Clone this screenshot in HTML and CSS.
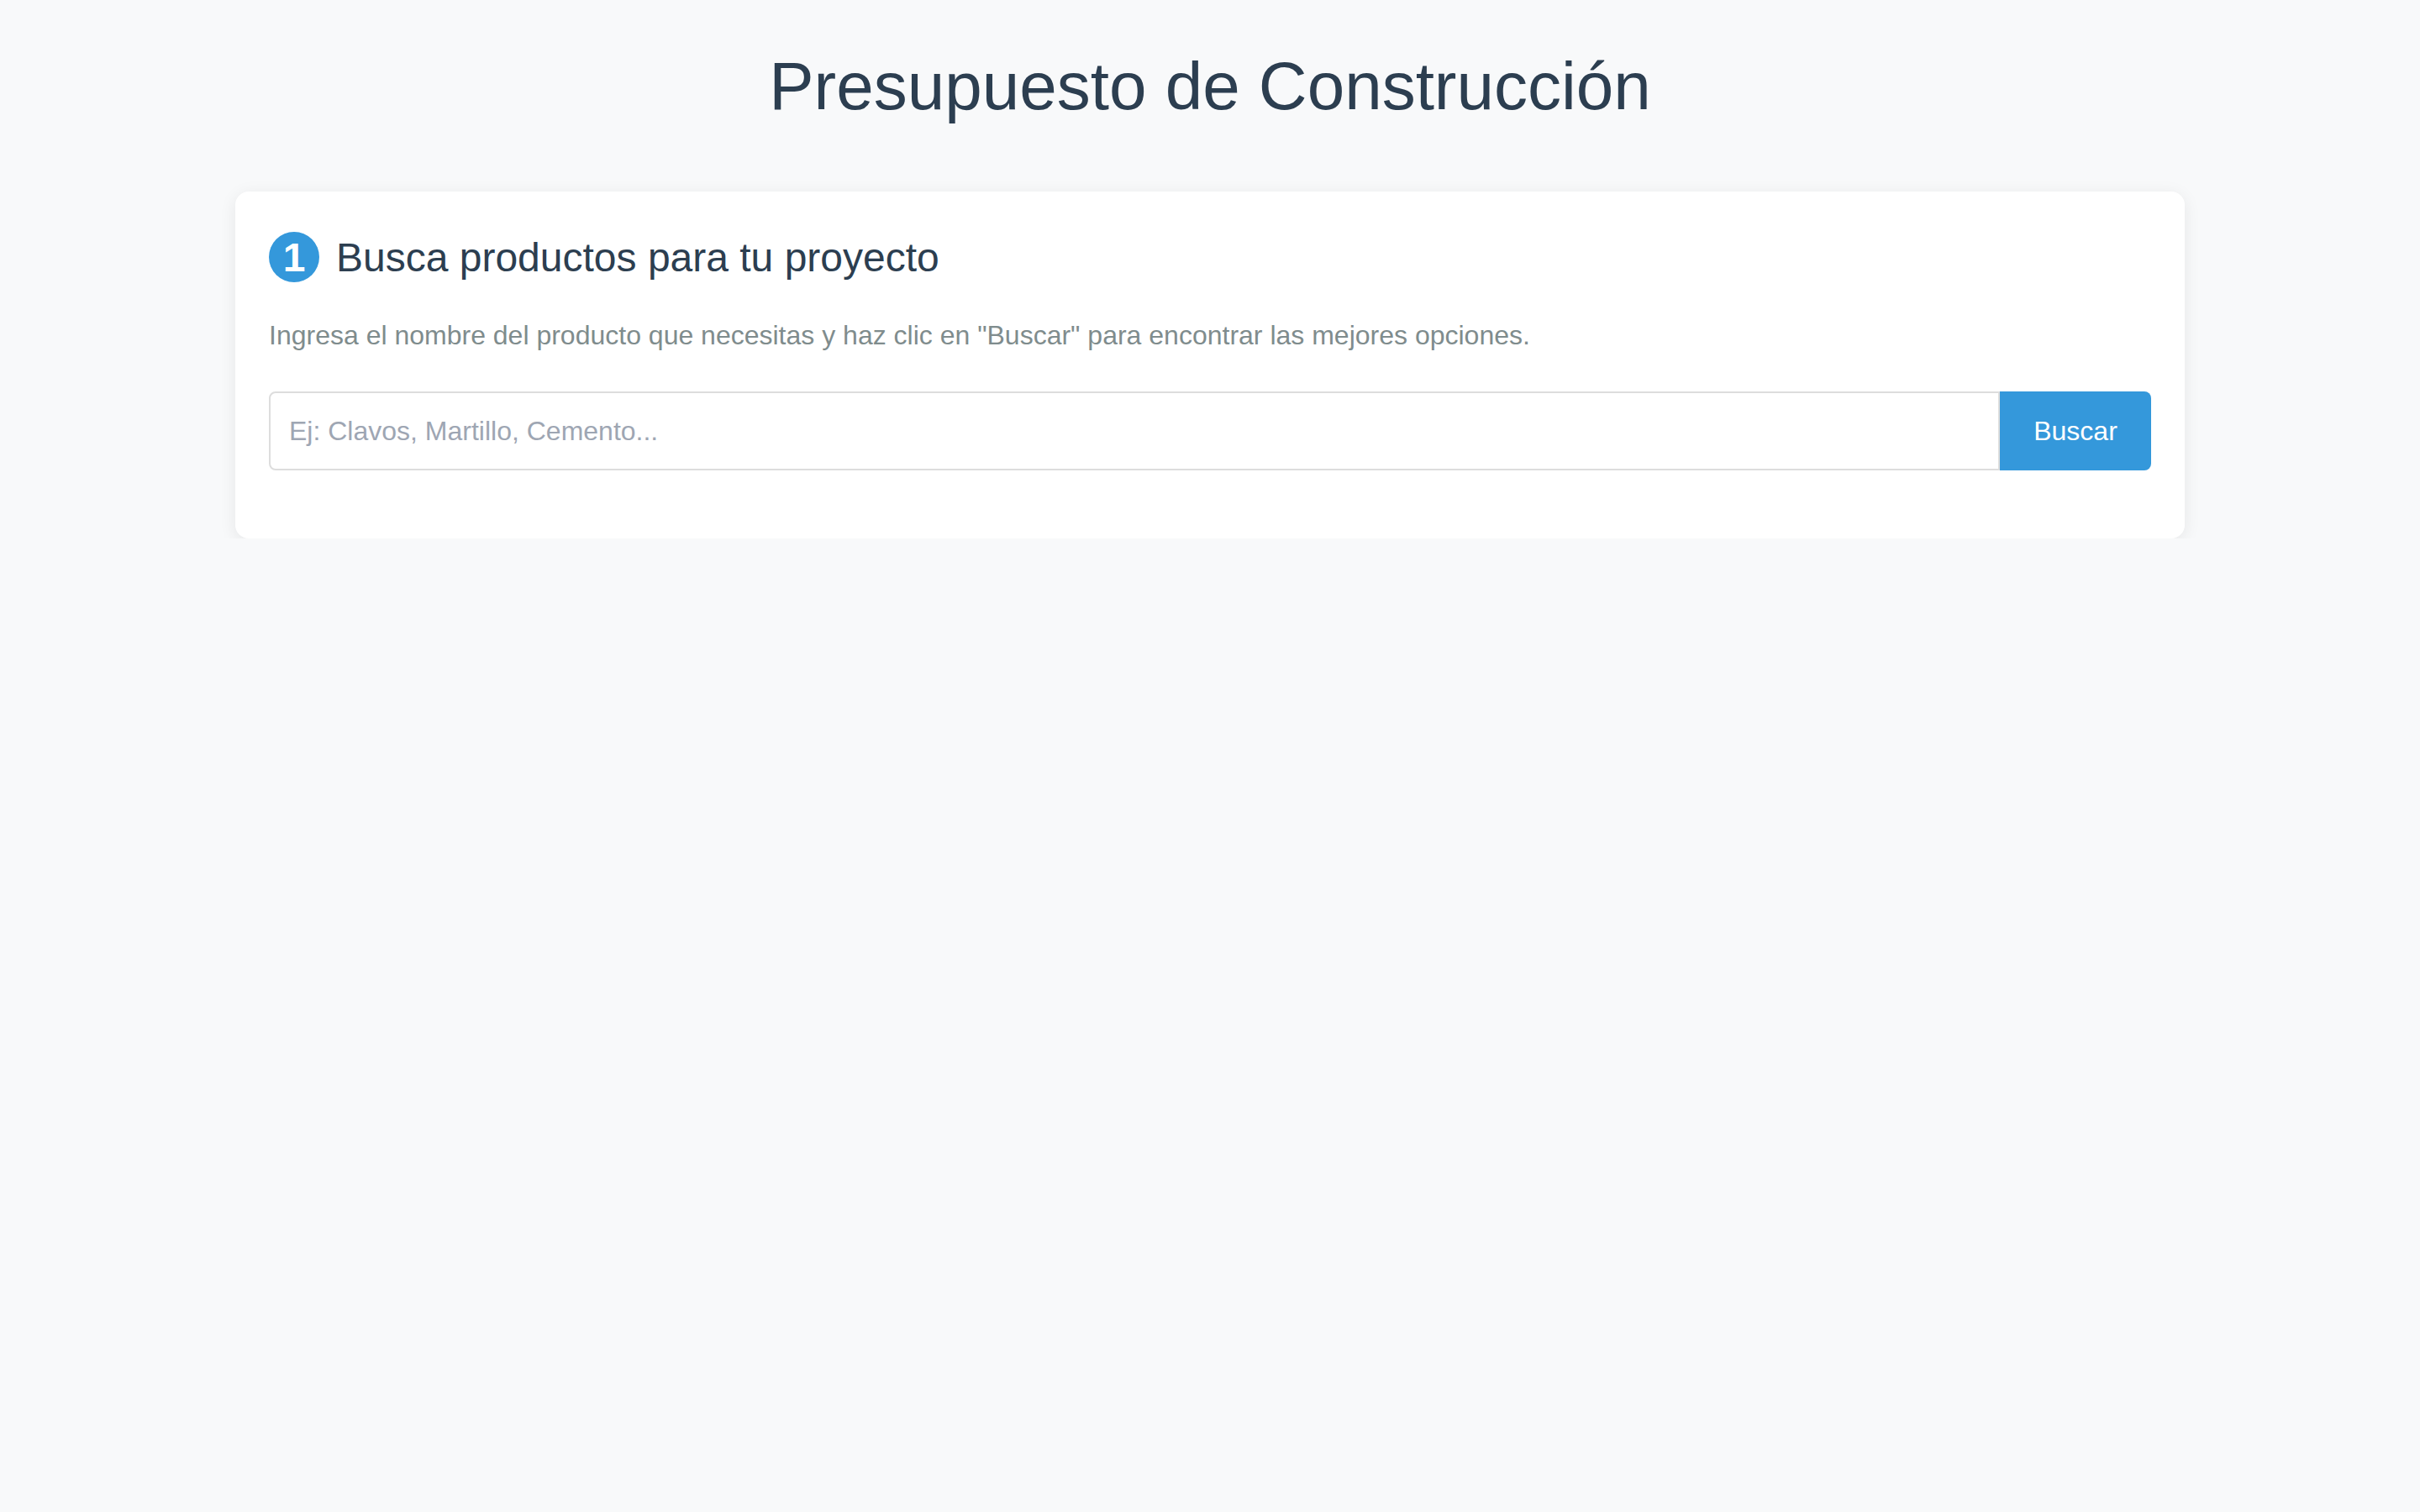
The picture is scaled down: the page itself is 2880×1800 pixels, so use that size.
FILE: index.html
```html
<!DOCTYPE html>
<html lang="es">
<head>
<meta charset="utf-8">
<title>Presupuesto de Construcción</title>
<link rel="stylesheet" href="styles.css">
</head>
<body>
<main class="page">
  <h1 class="title">Presupuesto de Construcción</h1>
  <section class="card">
    <h2 class="step-title"><span class="step-num">1</span>Busca productos para tu proyecto</h2>
    <p class="step-desc">Ingresa el nombre del producto que necesitas y haz clic en "Buscar" para encontrar las mejores opciones.</p>
    <form class="search" onsubmit="return false;">
      <input class="search-input" type="text" placeholder="Ej: Clavos, Martillo, Cemento...">
      <button class="search-btn" type="submit">Buscar</button>
    </form>
  </section>
</main>
</body>
</html>
```
FILE: styles.css
```css
* { box-sizing: border-box; }
html, body { margin: 0; padding: 0; }
body {
  background: #f8f9fa;
  font-family: "Liberation Sans", Arial, sans-serif;
  color: #2c3e50;
  font-size: 32px;
}
.page {
  max-width: 2320px;
  margin: 0 auto;
  padding-top: 57px;
}
.title {
  margin: 0 0 79px;
  font-size: 80px;
  font-weight: 400;
  line-height: normal;
  text-align: center;
  color: #2c3e50;
}
.card {
  background: #ffffff;
  border-radius: 16px;
  box-shadow: 0 4px 20px rgba(0, 0, 0, 0.08);
  padding: 48px 40px 81px;
}
.step-title {
  display: flex;
  align-items: center;
  gap: 20px;
  margin: 0 0 45px;
  font-size: 48px;
  font-weight: 400;
  line-height: normal;
  color: #2c3e50;
}
.step-num {
  width: 60px;
  height: 60px;
  flex: none;
  border-radius: 50%;
  background: #3498db;
  color: #ffffff;
  font-weight: 700;
  font-size: 48px;
  display: flex;
  align-items: center;
  justify-content: center;
}
.step-desc {
  margin: 0 0 48px;
  font-size: 32px;
  line-height: normal;
  color: #7f8c8d;
}
.search {
  display: flex;
  height: 94px;
}
.search-input {
  flex: 1;
  min-width: 0;
  height: 100%;
  border: 2px solid #dddddd;
  border-radius: 8px 0 0 8px;
  padding: 0 22px;
  font-family: "Liberation Sans", Arial, sans-serif;
  font-size: 32px;
  color: #2c3e50;
  outline: none;
  background: #ffffff;
}
.search-input::placeholder {
  color: #9ea6b3;
}
.search-btn {
  width: 180px;
  flex: none;
  height: 100%;
  border: none;
  border-radius: 0 8px 8px 0;
  background: #3498db;
  color: #ffffff;
  font-family: "Liberation Sans", Arial, sans-serif;
  font-size: 32px;
  cursor: pointer;
}
```
